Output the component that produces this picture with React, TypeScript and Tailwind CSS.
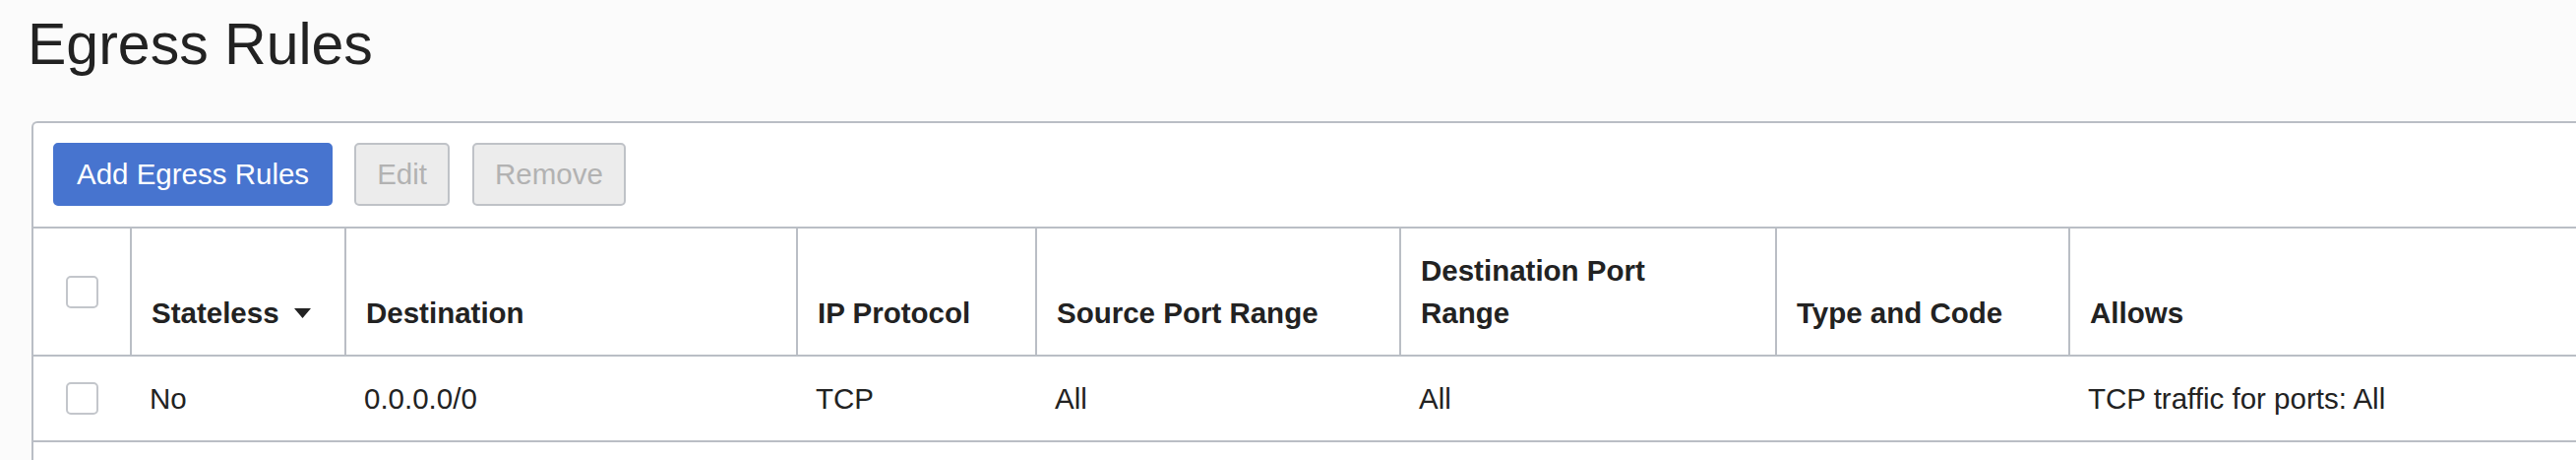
import React from "react";

const line = "border-[#babec5]";

function Checkbox() {
  return <div className="h-[33px] w-[33px] rounded-[5px] border-2 border-[#c3c6cb] bg-white" />;
}

function SortDown() {
  return (
    <svg width="17" height="10" viewBox="0 0 17 10" className="ml-[15px] inline-block align-[5px]">
      <path d="M0 0 H17 L8.5 10 Z" fill="#222" />
    </svg>
  );
}

const headers = [
  { label: "Stateless", sort: true },
  { label: "Destination" },
  { label: "IP Protocol" },
  { label: "Source Port Range" },
  { label: "Destination Port Range", narrow: true },
  { label: "Type and Code" },
  { label: "Allows" },
];

const row = ["No", "0.0.0.0/0", "TCP", "All", "All", "", "TCP traffic for ports: All"];

export default function App() {
  return (
    <div
      className="h-[467px] w-full overflow-hidden bg-[#fbfbfb] pt-[10px] text-[#222]"
      style={{ fontFamily: '"Liberation Sans", Arial, sans-serif' }}
    >
      <h1 className="ml-[28px] text-[59px] font-normal leading-[71px]">Egress Rules</h1>

      <div className={`ml-[32px] mt-[42px] h-[420px] w-[2650px] rounded-tl-[6px] border-l-2 border-t-2 ${line} bg-white`}>
        {/* toolbar */}
        <div className={`flex items-center border-b-2 ${line} pb-[21px] pl-[20px] pt-[20px]`}>
          <button className="h-[64px] rounded-[5px] border-2 border-[#4774cf] bg-[#4774cf] px-[22px] text-[29.5px] text-white">
            Add Egress Rules
          </button>
          <button className="ml-[22px] h-[64px] rounded-[5px] border-2 border-[#bfc2c7] bg-[#ececec] px-[21px] text-[29.5px] text-[#b2b2b2]">
            Edit
          </button>
          <button className="ml-[23px] h-[64px] rounded-[5px] border-2 border-[#bfc2c7] bg-[#ececec] px-[21px] text-[29.5px] text-[#b2b2b2]">
            Remove
          </button>
        </div>

        {/* table */}
        <div className="grid grid-cols-[98px_218px_459px_243px_370px_382px_298px_1fr] text-[29.5px] leading-[43px]">
          <div className={`flex items-center justify-center border-b-2 ${line}`}>
            <Checkbox />
          </div>
          {headers.map((h) => (
            <div
              key={h.label}
              className={`flex items-end border-b-2 border-l-2 ${line} py-[21px] pl-5 pr-5 font-bold`}
            >
              <span className={h.narrow ? "max-w-[300px]" : ""}>
                {h.label}
                {h.sort && <SortDown />}
              </span>
            </div>
          ))}

          <div className={`flex items-center justify-center border-b-2 ${line}`}>
            <Checkbox />
          </div>
          {row.map((v, i) => (
            <div key={i} className={`border-b-2 ${line} py-[21px] pl-5 pr-5`}>
              {v}
            </div>
          ))}
        </div>
      </div>
    </div>
  );
}
